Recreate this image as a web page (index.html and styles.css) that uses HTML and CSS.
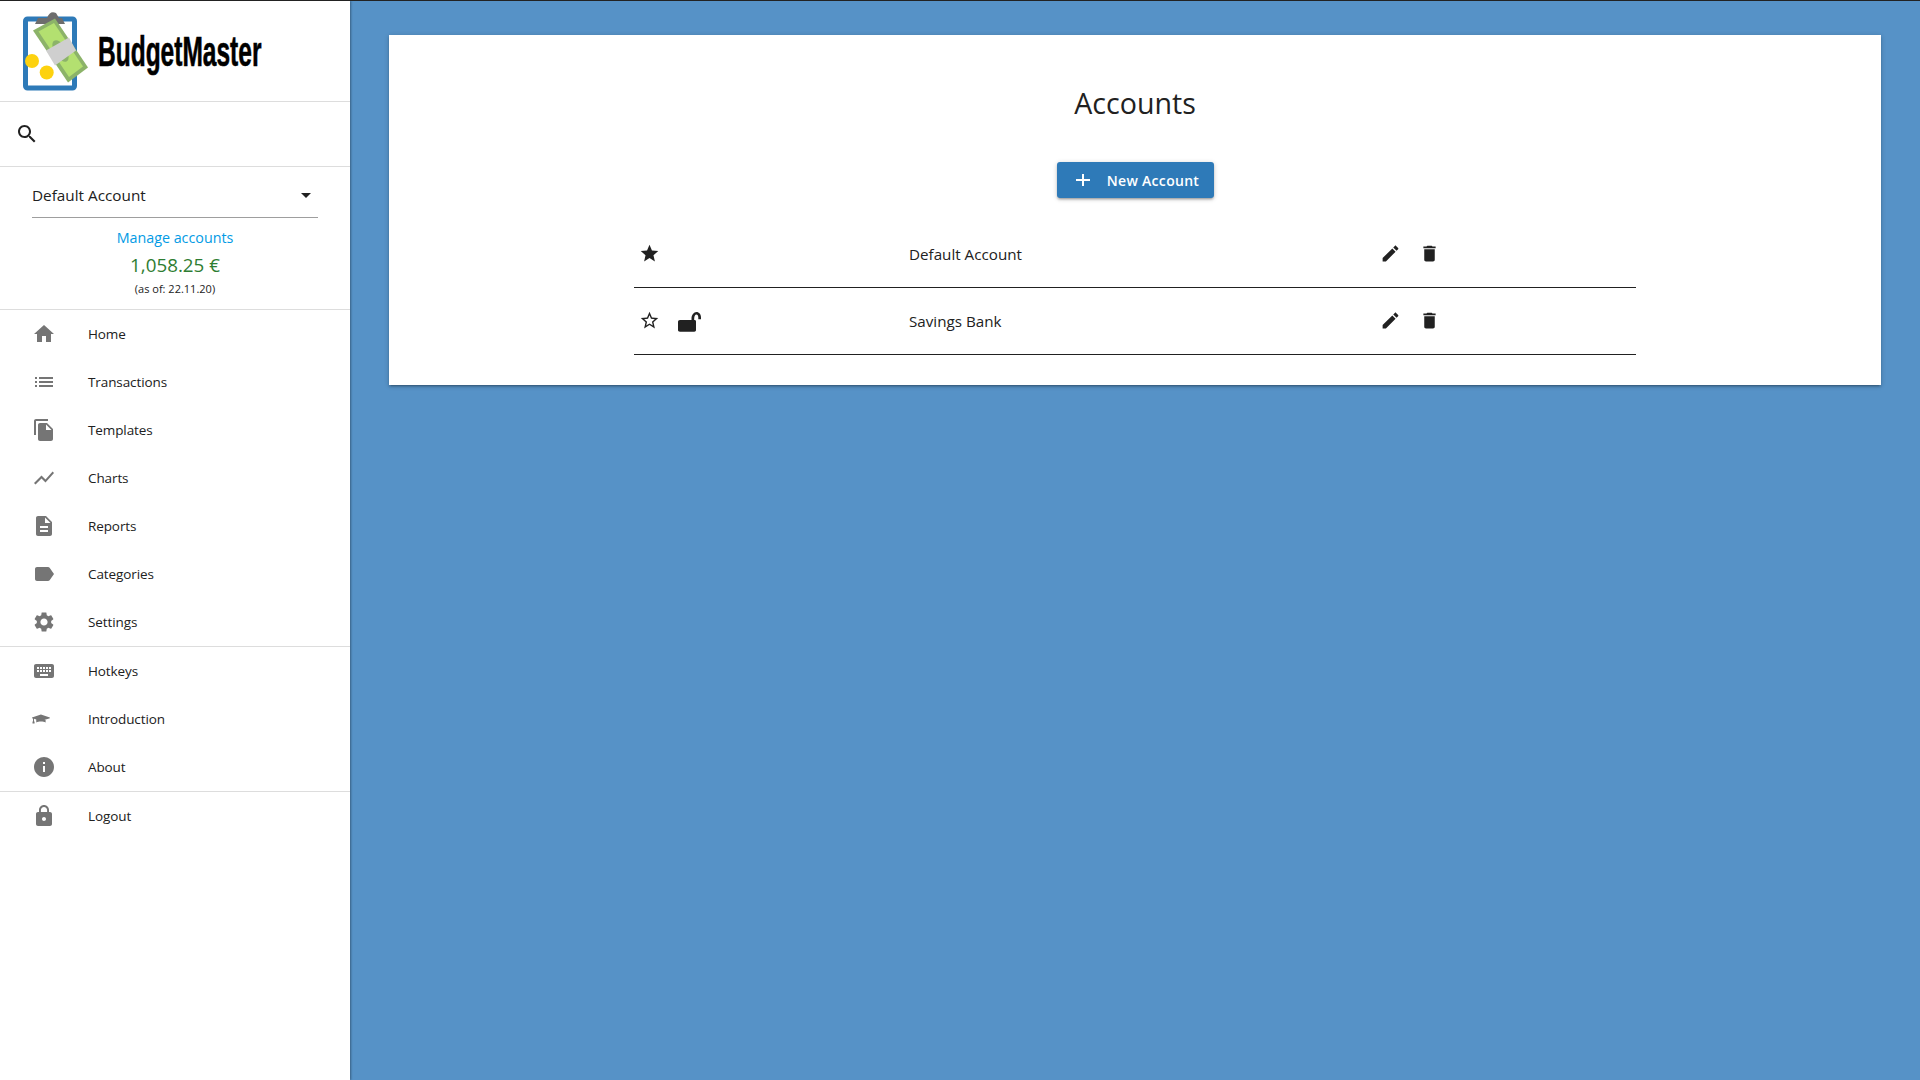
FILE: index.html
```html
<!DOCTYPE html>
<html lang="en">
<head>
  <meta charset="UTF-8" />
  <title>BudgetMaster - Accounts</title>
  <link rel="stylesheet" href="styles.css">
</head>
<body>
  <aside class="sidebar">
    <div class="logo">
      <svg class="logo-img" viewBox="0 0 70 82" width="70" height="82">
        <rect x="2.500" y="9" width="49" height="69" rx="2" fill="#fff" stroke="#2e7ab8" stroke-width="5"/>
        <path d="M12 14 L15 8 H24 Q27 0 33 3 L36 8 H39 L42 14 Z" fill="#6d6d6d"/>
        <path d="M10 20.500 L32 8.500 L65 57.500 L45 72.500 Z" fill="#8cb369"/>
        <path d="M15.500 21.500 L31 13 L60 56.500 L46 67 Z" fill="#b3e070"/>
        <ellipse cx="37.500" cy="41" rx="6" ry="12" transform="rotate(-32 37.500 41)" fill="#8cb369"/>
        <path d="M23 40.500 L46 27.500 L53 40.500 L32 55.500 Z" fill="#cfcfcf"/>
        <circle cx="9" cy="51" r="7" fill="#fdd20f"/>
        <circle cx="23.700" cy="62.500" r="7" fill="#fdd20f"/>
      </svg>
      <span class="logo-text">BudgetMaster</span>
    </div>
    <div class="search">
      <svg class="icon-dark" viewBox="0 0 24 24" width="24" height="24"><path d="M15.5 14h-.79l-.28-.27C15.41 12.59 16 11.11 16 9.500 16 5.910 13.090 3 9.500 3S3 5.910 3 9.500 5.910 16 9.500 16c1.610 0 3.090-.59 4.230-1.570l.27.28v.79l5 4.990L20.490 19l-4.990-5zm-6 0C7.010 14 5 11.990 5 9.500S7.010 5 9.500 5 14 7.010 14 9.500 11.990 14 9.500 14z"/></svg>
    </div>
    <div class="account">
      <div class="account-select">
        <span>Default Account</span>
        <span class="caret"></span>
      </div>
      <a class="manage" href="#">Manage accounts</a>
      <div class="balance">1,058.25 €</div>
      <div class="as-of">(as of: 22.11.20)</div>
    </div>
    <nav>
      <ul class="nav-group">
        <li><svg viewBox="0 0 24 24"><path d="M10 20v-6h4v6h5v-8h3L12 3 2 12h3v8z"/></svg>Home</li>
        <li><svg viewBox="0 0 24 24"><path d="M3 13h2v-2H3v2zm0 4h2v-2H3v2zm0-8h2V7H3v2zm4 4h14v-2H7v2zm0 4h14v-2H7v2zM7 7v2h14V7H7z"/></svg>Transactions</li>
        <li><svg viewBox="0 0 24 24"><path d="M16 1H4c-1.100 0-2 .9-2 2v14h2V3h12V1zm-1 4l6 6v10c0 1.100-.9 2-2 2H7.990C6.890 23 6 22.100 6 21l.01-14c0-1.100.89-2 1.990-2h7zm-1 7h5.500L14 6.500V12z"/></svg>Templates</li>
        <li><svg viewBox="0 0 24 24"><path d="M3.500 18.490l6-6.010 4 4L22 6.920l-1.410-1.410-7.090 7.970-4-4L2 16.990z"/></svg>Charts</li>
        <li><svg viewBox="0 0 24 24"><path d="M14 2H6c-1.100 0-1.990.9-1.990 2L4 20c0 1.100.89 2 1.990 2H18c1.100 0 2-.9 2-2V8l-6-6zm2 16H8v-2h8v2zm0-4H8v-2h8v2zm-3-5V3.500L18.500 9H13z"/></svg>Reports</li>
        <li><svg viewBox="0 0 24 24"><path d="M17.630 5.840C17.270 5.330 16.670 5 16 5L5 5.010C3.900 5.010 3 5.900 3 7v10c0 1.100.9 1.990 2 1.990L16 19c.67 0 1.270-.33 1.630-.84L22 12l-4.370-6.160z"/></svg>Categories</li>
        <li><svg viewBox="0 0 24 24"><path d="M19.140 12.940c.04-.3.06-.61.06-.94 0-.32-.02-.64-.07-.94l2.030-1.580c.18-.14.23-.41.12-.61l-1.920-3.320c-.12-.22-.37-.29-.59-.22l-2.390.96c-.5-.38-1.030-.7-1.620-.94l-.36-2.540c-.04-.24-.24-.41-.48-.41h-3.840c-.24 0-.43.17-.47.41l-.36 2.540c-.59.24-1.130.57-1.620.94l-2.390-.96c-.22-.08-.47 0-.59.22L2.740 8.870c-.12.21-.08.47.12.61l2.030 1.580c-.05.3-.09.63-.09.94s.02.64.07.94l-2.030 1.580c-.18.14-.23.41-.12.61l1.920 3.320c.12.22.37.29.59.22l2.390-.96c.5.38 1.030.7 1.620.94l.36 2.540c.05.24.24.41.48.41h3.840c.24 0 .44-.17.47-.41l.36-2.540c.59-.24 1.130-.56 1.620-.94l2.390.96c.22.08.47 0 .59-.22l1.920-3.320c.12-.22.07-.47-.12-.61l-2.010-1.580zM12 15.600c-1.980 0-3.600-1.620-3.600-3.600s1.620-3.600 3.600-3.600 3.600 1.620 3.600 3.600-1.620 3.600-3.600 3.600z"/></svg>Settings</li>
      </ul>
      <ul class="nav-group">
        <li><svg viewBox="0 0 24 24"><path d="M20 5H4c-1.100 0-1.990.9-1.990 2L2 17c0 1.100.9 2 2 2h16c1.100 0 2-.9 2-2V7c0-1.100-.9-2-2-2zm-9 3h2v2h-2V8zm0 3h2v2h-2v-2zM8 8h2v2H8V8zm0 3h2v2H8v-2zm-1 2H5v-2h2v2zm0-3H5V8h2v2zm9 7H8v-2h8v2zm0-4h-2v-2h2v2zm0-3h-2V8h2v2zm3 3h-2v-2h2v2zm0-3h-2V8h2v2z"/></svg>Hotkeys</li>
        <li><svg viewBox="0 0 24 24"><path transform="translate(0 2) scale(.85)" d="M5 12.200v3.800c1.500-.9 3.300-1.200 5.500-1.200s4 .3 5.500 1.200v-3.800l-5.500 1.800zM10.500 6.500L0 10v.8l1.200.4v3.600H.6V17h2.400v-2.200h-.6v-3.200l8.100 2.600L21 10.800V10z"/></svg>Introduction</li>
        <li><svg viewBox="0 0 24 24"><path d="M12 2C6.480 2 2 6.480 2 12s4.480 10 10 10 10-4.480 10-10S17.520 2 12 2zm1 15h-2v-6h2v6zm0-8h-2V7h2v2z"/></svg>About</li>
      </ul>
      <ul class="nav-group">
        <li><svg viewBox="0 0 24 24"><path d="M18 8h-1V6c0-2.760-2.240-5-5-5S7 3.240 7 6v2H6c-1.100 0-2 .9-2 2v10c0 1.100.9 2 2 2h12c1.100 0 2-.9 2-2V10c0-1.100-.9-2-2-2zm-6 9c-1.100 0-2-.9-2-2s.9-2 2-2 2 .9 2 2-.9 2-2 2zm3.100-9H8.900V6c0-1.710 1.390-3.100 3.100-3.100 1.710 0 3.100 1.390 3.100 3.100v2z"/></svg>Logout</li>
      </ul>
    </nav>
  </aside>

  <main>
    <section class="card">
      <h1>Accounts</h1>
      <div class="actions">
        <button class="btn">
          <svg viewBox="0 0 24 24" width="24" height="24"><path d="M19 13h-6v5h-2v-5H5v-2h6V6h2v5h6v2z"/></svg>
          New Account
        </button>
      </div>
      <div class="accounts">
        <div class="row">
          <div class="row-icons">
            <svg viewBox="0 0 24 24"><path d="M12 17.270L18.180 21l-1.640-7.030L22 9.240l-7.190-.61L12 2 9.190 8.630 2 9.240l5.460 4.730L5.820 21z"/></svg>
          </div>
          <div>Default Account</div>
          <div class="row-actions">
            <svg viewBox="0 0 24 24"><path d="M3 17.250V21h3.750L17.810 9.940l-3.750-3.750L3 17.250zM20.710 7.040c.39-.39.39-1.020 0-1.410l-2.340-2.340c-.39-.39-1.020-.39-1.410 0l-1.830 1.830 3.750 3.750 1.830-1.830z"/></svg>
            <svg viewBox="0 0 24 24"><path d="M6 19c0 1.100.9 2 2 2h8c1.100 0 2-.9 2-2V7H6v12zM19 4h-3.500l-1-1h-5l-1 1H5v2h14V4z"/></svg>
          </div>
        </div>
        <div class="row">
          <div class="row-icons">
            <svg viewBox="0 0 24 24"><path d="M22 9.240l-7.190-.62L12 2 9.190 8.630 2 9.240l5.460 4.730L5.820 21 12 17.270 18.180 21l-1.630-7.030L22 9.240zM12 15.400l-3.760 2.270 1-4.280-3.320-2.880 4.380-.38L12 6.100l1.710 4.040 4.380.38-3.320 2.880 1 4.280L12 15.400z"/></svg>
            <svg class="lock-open" viewBox="0 0 24 24"><path d="M3 11h11.500V9.500c0-3.500 2.300-6.500 5-6.500 2.500 0 4.500 2.300 4.500 5.500v1.800h-2.700V8.500c0-1.700-.8-3-1.900-3-1.300 0-2.200 1.700-2.200 4V11h.3c1 0 1.500.7 1.500 1.500V21c0 1-.7 1.700-1.700 1.700H3c-1.300 0-2-.7-2-1.700v-8c0-1.300.7-2 2-2z"/></svg>
          </div>
          <div>Savings Bank</div>
          <div class="row-actions">
            <svg viewBox="0 0 24 24"><path d="M3 17.250V21h3.750L17.810 9.940l-3.750-3.750L3 17.250zM20.710 7.040c.39-.39.39-1.020 0-1.410l-2.340-2.340c-.39-.39-1.020-.39-1.410 0l-1.830 1.830 3.750 3.750 1.830-1.830z"/></svg>
            <svg viewBox="0 0 24 24"><path d="M6 19c0 1.100.9 2 2 2h8c1.100 0 2-.9 2-2V7H6v12zM19 4h-3.500l-1-1h-5l-1 1H5v2h14V4z"/></svg>
          </div>
        </div>
      </div>
    </section>
  </main>
</body>
</html>
```

FILE: styles.css
```css
* {
  margin: 0;
  padding: 0;
  box-sizing: border-box;
}
html, body {
  height: 100%;
  overflow: hidden;
}
body {
  display: flex;
  font-family: "Open Sans", "Noto Sans", sans-serif;
  background: #5692c7;
  color: #212121;
  border-top: 1px solid #222;
}
.sidebar {
  width: 350px;
  flex-shrink: 0;
  background: #fff;
  box-shadow: 1px 0 2px rgba(0,0,0,0.35);
}
.logo {
  height: 101px;
  padding-left: 23px;
  display: flex;
  align-items: center;
  gap: 5px;
  border-bottom: 1px solid #ddd;
}
.logo-img {
  flex-shrink: 0;
  margin-top: -1px;
}
.logo-text {
  font-family: "Liberation Sans", sans-serif;
  font-weight: 700;
  font-size: 43px;
  color: #000;
  transform: scaleX(0.57);
  transform-origin: left center;
  white-space: nowrap;
  -webkit-text-stroke: 0.6px #000;
}
.search {
  height: 65px;
  padding-left: 15px;
  display: flex;
  align-items: center;
  border-bottom: 1px solid #ddd;
}
.icon-dark {
  fill: #212121;
}
.account {
  height: 143px;
  padding: 0 32px;
  text-align: center;
  border-bottom: 1px solid #ddd;
}
.account-select {
  height: 51px;
  padding: 5px 7px 0 0;
  display: flex;
  justify-content: space-between;
  align-items: center;
  font-size: 15.3px;
  border-bottom: 1px solid #9e9e9e;
}
.caret {
  margin-top: 1px;
  border-top: 5px solid #212121;
  border-left: 5px solid transparent;
  border-right: 5px solid transparent;
}
.manage {
  display: block;
  margin-top: 9px;
  font-size: 14.3px;
  line-height: 22px;
  color: #039be5;
  text-decoration: none;
}
.balance {
  margin-top: 2px;
  font-size: 18.8px;
  line-height: 28px;
  color: #2e7d32;
}
.as-of {
  font-size: 11px;
  line-height: 20px;
}
.nav-group {
  list-style: none;
  border-bottom: 1px solid #ddd;
}
.nav-group:last-child {
  border-bottom: none;
}
.nav-group li {
  height: 48px;
  padding-left: 32px;
  display: flex;
  align-items: center;
  gap: 32px;
  font-size: 13.5px;
  letter-spacing: -0.1px;
  color: #212121;
}
.nav-group svg {
  width: 24px;
  height: 24px;
  fill: #757575;
}
main {
  flex: 1;
  padding: 34px 39px;
}
.card {
  height: 350px;
  background: #fff;
  box-shadow: 0 2px 2px 0 rgba(0,0,0,0.14), 0 3px 1px -2px rgba(0,0,0,0.12), 0 1px 5px 0 rgba(0,0,0,0.2);
  padding-top: 47px;
}
h1 {
  font-size: 28.6px;
  font-weight: 400;
  line-height: 42px;
  text-align: center;
}
.actions {
  margin-top: 38px;
  display: flex;
  justify-content: center;
}
.btn {
  height: 36px;
  width: 157px;
  display: flex;
  align-items: center;
  justify-content: center;
  gap: 12px;
  font-family: inherit;
  font-size: 14px;
  font-weight: 600;
  letter-spacing: 0.3px;
  color: #fff;
  background: #2e7ab8;
  border: none;
  border-radius: 3px;
  box-shadow: 0 2px 2px 0 rgba(0,0,0,0.14), 0 3px 1px -2px rgba(0,0,0,0.12), 0 1px 5px 0 rgba(0,0,0,0.2);
}
.btn svg {
  fill: #fff;
  flex-shrink: 0;
}
.accounts {
  width: 1002px;
  margin: 23px auto 0;
}
.row {
  height: 67px;
  display: grid;
  grid-template-columns: 275px 471px 1fr;
  align-items: center;
  font-size: 15.2px;
  border-bottom: 1px solid #212121;
}
.row-icons, .row-actions {
  display: flex;
  align-items: center;
  padding-bottom: 1px;
}
.row-icons {
  padding-left: 5px;
  gap: 17px;
}
.row-actions {
  gap: 18px;
  margin-left: -0.5px;
}
.row svg {
  width: 21px;
  height: 21px;
  fill: #212121;
}
.row .lock-open {
  width: 24px;
  height: 24px;
}
```
